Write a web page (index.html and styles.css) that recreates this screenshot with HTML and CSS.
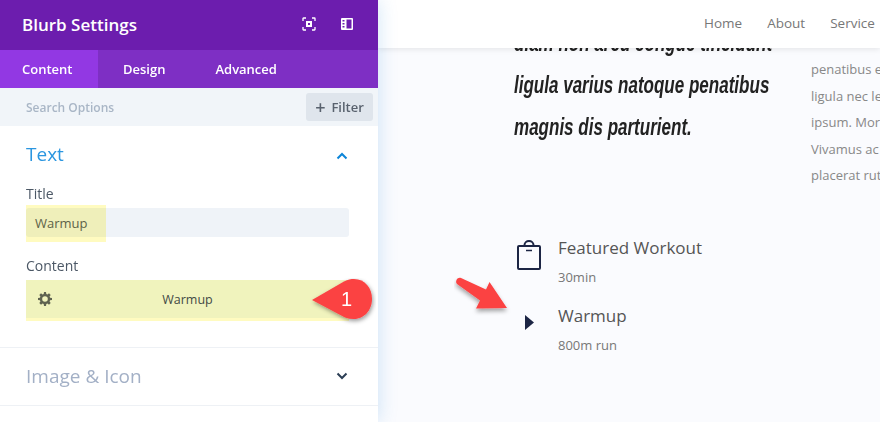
FILE: index.html
```html
<!DOCTYPE html>
<html lang="en">
<head>
    <meta charset="UTF-8">
    <meta name="viewport" content="width=device-width, initial-scale=1.0">
    <title>Blurb Settings</title>
    <link rel="stylesheet" href="styles.css">
</head>
<body>
    <aside class="panel">
        <div class="panel-head">
            <h2>Blurb Settings</h2>
            <div class="head-icons">
                <svg width="14" height="14" viewBox="0 0 14 14" fill="none" stroke="#fff" stroke-width="1.3">
                    <path d="M1 4V1.500A.5.5 0 0 1 1.500 1H4M10 1h2.500a.5.5 0 0 1 .5.5V4M13 10v2.500a.5.5 0 0 1-.5.5H10M4 13H1.500a.5.5 0 0 1-.5-.5V10"/>
                    <rect x="4" y="4" width="6" height="6" fill="#fff" stroke="none"/>
                    <rect x="6" y="6" width="2" height="2" fill="#6c1dae" stroke="none"/>
                </svg>
                <svg width="12" height="12" viewBox="0 0 12 12">
                    <path fill="#fff" fill-rule="evenodd" d="M0 1a1 1 0 0 1 1-1h10a1 1 0 0 1 1 1v10a1 1 0 0 1-1 1H1a1 1 0 0 1-1-1zM5.500 1.500V10.500H10.500V1.500zM1.500 2V3.500H3.500V2zM1.500 5V6.500H3.500V5zM1.500 8V9.500H3.500V8z"/>
                </svg>
            </div>
        </div>
        <nav class="tabs">
            <a class="tab active">Content</a>
            <a class="tab">Design</a>
            <a class="tab">Advanced</a>
        </nav>
        <div class="search-row">
            <span class="search-label">Search Options</span>
            <button class="filter-btn"><span class="plus">+</span>Filter</button>
        </div>
        <section class="group open">
            <div class="group-title">
                <h3>Text</h3>
                <svg class="chevron" width="12" height="8" viewBox="0 0 12 8" fill="none" stroke="#0c85d8" stroke-width="2"><path d="M1.500 6.500 6 2l4.500 4.500"/></svg>
            </div>
            <label class="field-label">Title</label>
            <div class="title-input">
                Warmup
                <span class="mark"></span>
            </div>
            <label class="field-label content-label">Content</label>
            <div class="content-box">
                <svg class="gear" width="14" height="14" viewBox="0 0 14 14">
                    <path fill="#5f6350" fill-rule="evenodd" d="M6 0h2l.3 1.900 1.200.5L11 1.300l1.700 1.700-1.100 1.500.5 1.200 1.900.3v2l-1.900.3-.5 1.200 1.100 1.500-1.700 1.700-1.500-1.100-1.200.5L8 14H6l-.3-1.900-1.200-.5L3 12.700 1.300 11l1.100-1.500-.5-1.200L0 8V6l1.900-.3.5-1.200L1.300 3 3 1.300l1.500 1.100 1.200-.5zM7 4.200a2.800 2.800 0 1 0 0 5.600 2.800 2.800 0 0 0 0-5.600z"/>
                </svg>
                <span class="content-text">Warmup</span>
                <span class="content-strip"></span>
            </div>
        </section>
        <section class="group closed">
            <h3>Image &amp; Icon</h3>
            <svg class="chevron" width="12" height="8" viewBox="0 0 12 8" fill="none" stroke="#2c3e55" stroke-width="2"><path d="M1.500 1.500 6 6l4.500-4.500"/></svg>
        </section>
        <svg class="callout" width="66" height="50" viewBox="0 0 66 50">
            <defs>
                <filter id="calloutShadow" x="-20%" y="-20%" width="150%" height="150%">
                    <feDropShadow dx="1" dy="2" stdDeviation="2" flood-color="#000" flood-opacity=".4"/>
                </filter>
            </defs>
            <path fill="#fb4243" filter="url(#calloutShadow)" d="M2 22 34 3.500C38 1.500 41 1 44 1c11 0 18 9 18 20s-8 20-18 20c-3 0-6-.5-9-1.500z"/>
            <text x="31" y="28" class="callout-num">1</text>
        </svg>
    </aside>

    <main class="page">
        <header class="site-head">
            <a>Home</a>
            <a>About</a>
            <a>Service</a>
        </header>
        <div class="page-body">
            <div class="quote">
                <p>diam non arcu congue tincidunt</p>
                <p>ligula varius natoque penatibus</p>
                <p>magnis dis parturient.</p>
            </div>
            <div class="lorem">
                <p>penatibus et magnis</p>
                <p>ligula nec lectus</p>
                <p>ipsum. Morbi sed</p>
                <p>Vivamus ac lorem</p>
                <p>placerat rutrum</p>
            </div>
        </div>
        <div class="blurbs">
            <div class="blurb">
                <div class="blurb-icon bag">
                    <svg width="24" height="30" viewBox="0 0 24 30" fill="none" stroke="#1c2544" stroke-width="2">
                        <rect x="1" y="6" width="22" height="23" rx="1"/>
                        <path d="M7.500 6V5a4.500 4 0 0 1 9 0v1"/>
                        <path d="M9 10.500h6" stroke-width="1.500"/>
                    </svg>
                </div>
                <div>
                    <h4>Featured Workout</h4>
                    <p>30min</p>
                </div>
            </div>
            <div class="blurb">
                <div class="blurb-icon play">
                    <svg width="9" height="15" viewBox="0 0 9 15"><path fill="#1c2544" d="M0 0 9 7.500 0 15z"/></svg>
                </div>
                <div>
                    <h4>Warmup</h4>
                    <p>800m run</p>
                </div>
            </div>
        </div>
        <svg class="arrow" width="62" height="42" viewBox="0 0 62 42">
            <defs>
                <filter id="arrowShadow" x="-20%" y="-20%" width="150%" height="160%">
                    <feDropShadow dx="0" dy="3" stdDeviation="2" flood-color="#000" flood-opacity=".35"/>
                </filter>
            </defs>
            <path fill="#fb4243" filter="url(#arrowShadow)" d="M3.500 2.500 C5 1.500 6 1.500 7 2L32 13.500 35.500 6 53 32 22 32.500 26 24.500 3 8C1.500 6.500 2 4 3.500 2.500z"/>
        </svg>
    </main>
</body>
</html>
```

FILE: styles.css
```css
* {
    box-sizing: border-box;
}
html, body {
    margin: 0;
    height: 422px;
    overflow: hidden;
}
body {
    display: flex;
    font-family: "Open Sans", sans-serif;
    background-color: #fafbfe;
}
h2, h3, h4, p {
    margin: 0;
    font-weight: 400;
}

/* settings panel */
.panel {
    position: relative;
    z-index: 2;
    flex: 0 0 378px;
    background-color: #fff;
    box-shadow: 0 0 18px rgba(43, 135, 218, .22);
}
.panel-head {
    display: flex;
    align-items: center;
    justify-content: space-between;
    height: 50px;
    padding: 0 25px 2px 22px;
    background-color: #6c1dae;
}
.panel-head h2 {
    font-size: 17px;
    font-weight: 600;
    color: #fff;
}
.head-icons {
    display: flex;
    align-items: center;
    gap: 25px;
}
.tabs {
    display: flex;
    height: 38px;
    background-color: #7e2fc4;
}
.tab {
    display: flex;
    align-items: center;
    padding: 0 25px;
    font-size: 13px;
    font-weight: 600;
    color: #fff;
}
.tab.active {
    width: 98px;
    padding-left: 22px;
    background-color: #9238e3;
}
.search-row {
    display: flex;
    align-items: center;
    justify-content: space-between;
    height: 38px;
    padding: 0 5px 0 26px;
    background-color: #f1f5f9;
}
.search-label {
    font-size: 12px;
    font-weight: 600;
    color: #a9b6c6;
}
.filter-btn {
    display: flex;
    align-items: center;
    justify-content: center;
    gap: 6px;
    width: 67px;
    height: 28px;
    padding: 0;
    border: none;
    border-radius: 3px;
    background-color: #dfe5ec;
    font-family: inherit;
    font-size: 13px;
    font-weight: 600;
    color: #59626e;
}
.plus {
    font-size: 18px;
    line-height: 18px;
}
.group {
    padding: 0 29px 0 26px;
    border-bottom: 1px solid #eef1f5;
}
.group h3 {
    font-size: 19px;
}
.group.open {
    height: 222px;
    padding-top: 14px;
}
.group-title {
    display: flex;
    align-items: center;
    justify-content: space-between;
    height: 28px;
    margin-bottom: 16px;
}
.group-title h3 {
    color: #2b96e0;
}
.group-title .chevron {
    margin-top: 4px;
}
.chevron {
    margin-right: 1px;
}
.field-label {
    display: block;
    font-size: 14px;
    line-height: 20px;
    color: #4c5866;
}
.content-label {
    margin-top: 19px;
}
.title-input {
    position: relative;
    display: flex;
    align-items: center;
    height: 29px;
    margin-top: 4px;
    padding-left: 9px;
    border-radius: 3px;
    background-color: #eff3f8;
    font-size: 13px;
    font-weight: 500;
    color: #5d6460;
}
.mark {
    position: absolute;
    left: 0;
    top: -3px;
    width: 80px;
    height: 37px;
    background-color: #fffbc0;
    mix-blend-mode: multiply;
}
.content-box {
    position: relative;
    display: flex;
    align-items: center;
    justify-content: center;
    height: 38px;
    margin-top: 4px;
    background-color: #f0f3bd;
    font-size: 12.500px;
    font-weight: 500;
    color: #434a45;
}
.gear {
    position: absolute;
    left: 12px;
    top: 12px;
}
.content-strip {
    position: absolute;
    left: 0;
    right: 0;
    bottom: -3px;
    height: 3px;
    background-color: #fffbc0;
}
.group.closed {
    display: flex;
    align-items: center;
    justify-content: space-between;
    height: 58px;
    padding-bottom: 2px;
}
.group.closed h3 {
    color: #a3b0c6;
}
.callout {
    position: absolute;
    left: 310px;
    top: 278px;
}
.callout-num {
    font-family: "Liberation Sans", sans-serif;
    font-size: 20px;
    fill: #fff;
}

/* page behind the panel */
.page {
    position: relative;
    flex: 1;
    min-width: 0;
    overflow: hidden;
}
.site-head {
    position: relative;
    z-index: 1;
    display: flex;
    gap: 25px;
    height: 48px;
    padding: 14px 0 0 326px;
    background-color: #fff;
    box-shadow: 0 1px 6px rgba(0, 0, 0, .1);
    font-size: 13.500px;
    color: #777;
    white-space: nowrap;
}
.page-body {
    display: flex;
    gap: 40px;
    height: 180px;
    margin-top: -26px;
    padding-left: 136px;
}
.quote {
    flex: 0 0 257px;
    min-width: 0;
    font-family: "Liberation Sans", sans-serif;
    font-size: 23px;
    font-style: italic;
    line-height: 42px;
    color: #222;
    white-space: nowrap;
}
.quote p {
    font-weight: 700;
    transform: scaleX(.74);
    transform-origin: left;
}
.lorem {
    padding-top: 34px;
    font-size: 13px;
    line-height: 26.600px;
    color: #888;
    white-space: nowrap;
}
.blurbs {
    display: flex;
    flex-direction: column;
    gap: 18px;
    margin-top: 34px;
    padding-left: 136px;
}
.blurb {
    display: flex;
}
.blurb-icon {
    display: flex;
    justify-content: center;
    flex: 0 0 44px;
    width: 44px;
    padding-right: 14px;
}
.bag {
    padding-top: 4px;
}
.play {
    padding-top: 11px;
}
.blurb h4 {
    font-size: 17px;
    line-height: 24px;
    color: #555;
}
.blurb p {
    margin-top: 8px;
    font-size: 13px;
    line-height: 18px;
    color: #777;
}
.arrow {
    position: absolute;
    left: 76px;
    top: 276px;
}
```
